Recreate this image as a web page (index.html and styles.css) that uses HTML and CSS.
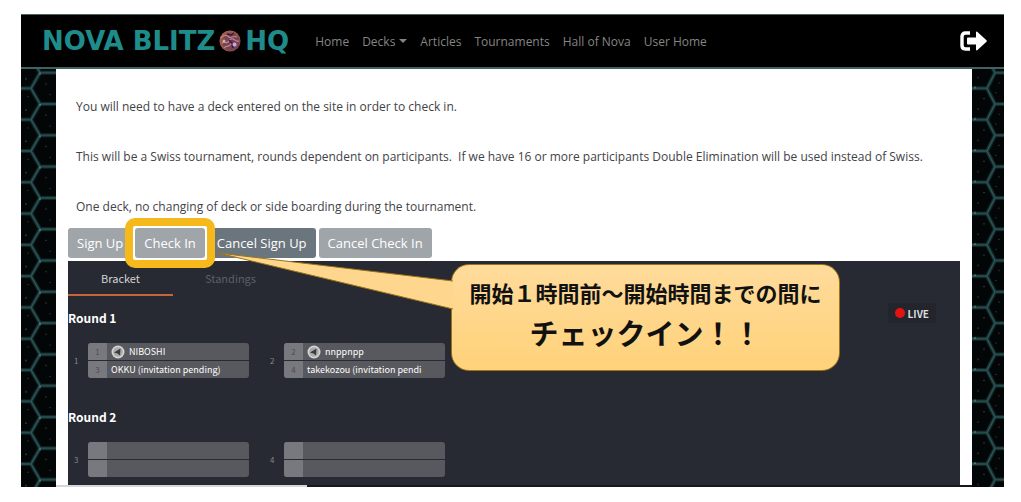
FILE: index.html
```
<!DOCTYPE html>
<html lang="en">
<head>
    <meta charset="UTF-8">
    <meta name="viewport" content="width=device-width, initial-scale=1.0">
    <title>Nova Blitz HQ - Tournament</title>
    <link rel="stylesheet" href="styles.css">
</head>
<body>

<div class="site">
    <header class="navbar">
        <a class="brand" href="#">
            <span>NOVA BLITZ</span>
            <svg class="planet" viewBox="0 0 22 22" aria-hidden="true">
                <defs>
                    <radialGradient id="planetFill" cx="0.55" cy="0.55" r="0.55">
                        <stop offset="0" stop-color="#6a3a5c"/>
                        <stop offset="0.7" stop-color="#7b4652"/>
                        <stop offset="1" stop-color="#b0684e"/>
                    </radialGradient>
                </defs>
                <circle cx="11" cy="11" r="10.5" fill="url(#planetFill)"/>
                <path d="M2 8c3-4 6-3 8-1s5-2 8 0M3 13c2-2 4 1 6-1s2-4 5-3 3 3 6 2M5 18c2-3 5-1 6-3s4-1 6 1" fill="none" stroke="#c08a8a" stroke-width="1.2"/>
                <path d="M8 4l4 1 3-2M10 10l3 3 1 5" fill="none" stroke="#3a1a38" stroke-width="1.5"/>
                <circle cx="15.5" cy="14.5" r="2" fill="#c9a6e8"/>
                <circle cx="5" cy="11" r="1.5" fill="#e0a898"/>
            </svg>
            <span>HQ</span>
        </a>
        <nav class="nav-links">
            <a href="#">Home</a>
            <a class="dropdown" href="#">Decks</a>
            <a href="#">Articles</a>
            <a href="#">Tournaments</a>
            <a href="#">Hall of Nova</a>
            <a href="#">User Home</a>
        </nav>
        <a class="logout" href="#" aria-label="Log out">
            <svg viewBox="0 0 28 20">
                <path d="M10 2H5.5Q2 2 2 5.5v9Q2 18 5.5 18H10" fill="none" stroke="#fff" stroke-width="3.4"/>
                <path d="M8 6.500h8V1.500Q16 0 17.500 1L26.500 9.200Q27.200 10 26.500 10.800L17.500 19Q16 20 16 18.500V13.500H8Q7 13.500 7 12.500V7.500Q7 6.500 8 6.500z" fill="#fff"/>
            </svg>
        </a>
    </header>

    <div class="page">
        <svg class="hex" aria-hidden="true">
            <defs>
                <pattern id="hexLeft" width="35" height="31.3" y="3.7" patternUnits="userSpaceOnUse">
                    <path d="M35 0H19L10 15.650L19 31.300H35M0 15.650H10" fill="none" stroke="#12282a" stroke-width="4"/>
                    <path d="M35 0H19L10 15.650L19 31.300H35M0 15.650H10" fill="none" stroke="#2b5556" stroke-width="1.5"/>
                    <circle cx="5" cy="6" r="0.6" fill="#777"/>
                    <circle cx="25" cy="11" r="0.5" fill="#875"/>
                    <circle cx="29" cy="22" r="0.6" fill="#555"/>
                    <circle cx="7" cy="24" r="0.5" fill="#754"/>
                    <circle cx="19" cy="1" r="1" fill="#4c8080"/>
                </pattern>
            </defs>
            <rect width="100%" height="100%" fill="#030606"/>
            <rect width="100%" height="100%" fill="url(#hexLeft)"/>
        </svg>

        <main class="content">
            <div class="rules">
                <p>You will need to have a deck entered on the site in order to check in.</p>
                <p>This will be a Swiss tournament, rounds dependent on participants.&nbsp; If we have 16 or more participants Double Elimination will be used instead of Swiss.</p>
                <p>One deck, no changing of deck or side boarding during the tournament.</p>
            </div>

            <div class="actions">
                <button class="btn">Sign Up</button>
                <div class="highlight">
                    <button class="btn">Check In</button>
                </div>
                <button class="btn btn-active">Cancel Sign Up</button>
                <button class="btn">Cancel Check In</button>
            </div>

            <section class="bracket">
                <div class="tabs">
                    <button class="tab tab-current">Bracket</button>
                    <button class="tab">Standings</button>
                </div>

                <div class="round-head">
                    <h2>Round 1</h2>
                    <span class="live">LIVE</span>
                </div>
                <div class="matches">
                    <div class="match">
                        <span class="match-no">1</span>
                        <div class="players">
                            <div class="player">
                                <span class="seed">1</span>
                                <span class="name">
                                    <svg class="avatar" viewBox="0 0 14 14"><circle cx="7" cy="7" r="6.5" fill="#d4d4d4"/><circle cx="7" cy="7" r="4.8" fill="#aaa"/><path d="M3 7.5L9.5 3.5L9 10.5L6.5 8.5z" fill="#3b3b3b"/></svg>
                                    NIBOSHI
                                </span>
                            </div>
                            <div class="player">
                                <span class="seed">3</span>
                                <span class="name">OKKU (invitation pending)</span>
                            </div>
                        </div>
                    </div>
                    <div class="match">
                        <span class="match-no">2</span>
                        <div class="players">
                            <div class="player">
                                <span class="seed">2</span>
                                <span class="name">
                                    <svg class="avatar" viewBox="0 0 14 14"><circle cx="7" cy="7" r="6.5" fill="#d4d4d4"/><circle cx="7" cy="7" r="4.8" fill="#aaa"/><path d="M3 7.5L9.5 3.5L9 10.5L6.5 8.5z" fill="#3b3b3b"/></svg>
                                    nnppnpp
                                </span>
                            </div>
                            <div class="player">
                                <span class="seed">4</span>
                                <span class="name">takekozou (invitation pendi</span>
                            </div>
                        </div>
                    </div>
                </div>

                <div class="round-head">
                    <h2>Round 2</h2>
                </div>
                <div class="matches">
                    <div class="match">
                        <span class="match-no">3</span>
                        <div class="players">
                            <div class="player"><span class="seed"></span></div>
                            <div class="player"><span class="seed"></span></div>
                        </div>
                    </div>
                    <div class="match">
                        <span class="match-no">4</span>
                        <div class="players">
                            <div class="player"><span class="seed"></span></div>
                            <div class="player"><span class="seed"></span></div>
                        </div>
                    </div>
                </div>

                <div class="callout" lang="ja">
                    <svg class="callout-tail" viewBox="0 0 236 60" aria-hidden="true">
                        <path d="M236 29L1 1L236 57" fill="#fed68d" stroke="#9b7416" stroke-width="1"/>
                    </svg>
                    <p class="callout-when">開始１時間前～開始時間までの間に</p>
                    <p class="callout-what">チェックイン！！</p>
                </div>
            </section>
            <div class="bottom-line"></div>
        </main>

        <svg class="hex" aria-hidden="true">
            <defs>
                <pattern id="hexRight" width="32" height="31.3" y="3.7" patternUnits="userSpaceOnUse">
                    <path d="M32 0H23L15 15.650L23 31.300H32M0 15.650H15" fill="none" stroke="#12282a" stroke-width="4"/>
                    <path d="M32 0H23L15 15.650L23 31.300H32M0 15.650H15" fill="none" stroke="#2b5556" stroke-width="1.5"/>
                    <circle cx="6" cy="5" r="0.6" fill="#666"/>
                    <circle cx="12" cy="26" r="0.6" fill="#765"/>
                    <circle cx="27" cy="10" r="0.5" fill="#864"/>
                    <circle cx="24" cy="20" r="0.5" fill="#666"/>
                    <circle cx="3" cy="15" r="1" fill="#4c8080"/>
                </pattern>
            </defs>
            <rect width="100%" height="100%" fill="#030606"/>
            <rect width="100%" height="100%" fill="url(#hexRight)"/>
        </svg>
    </div>
</div>

</body>
</html>
```
FILE: styles.css
```
* {
    box-sizing: border-box;
}
body {
    margin: 0;
    padding: 14px 17px 15px 21px;
    background-color: white;
    color: #3f4347;
    font-family: "Open Sans", "Noto Sans", sans-serif;
    font-size: 12px;
}
h2, p {
    margin: 0;
}
a {
    text-decoration: none;
}
button {
    border: none;
    font-family: inherit;
    cursor: pointer;
}

/* Navbar */
.navbar {
    display: flex;
    align-items: center;
    height: 55px;
    padding: 0 16px 0 21px;
    background-color: black;
    border-top: 1px solid #4d6664;
    border-bottom: 2px solid #3f6360;
}
.brand {
    display: flex;
    align-items: center;
    gap: 4px;
    color: #1f8c8c;
    font-family: "DejaVu Sans", sans-serif;
    font-size: 26px;
    font-weight: bold;
    line-height: 30px;
    white-space: nowrap;
}
.planet {
    width: 22px;
    height: 22px;
}
.nav-links {
    display: flex;
    gap: 13px;
    margin-left: 26px;
    white-space: nowrap;
}
.nav-links a {
    color: #858585;
}
.dropdown::after {
    content: "";
    display: inline-block;
    margin-left: 4px;
    vertical-align: 3px;
    border-top: 4px solid;
    border-left: 4px solid transparent;
    border-right: 4px solid transparent;
}
.logout {
    margin-left: auto;
}
.logout svg {
    display: block;
    width: 28px;
    height: 20px;
}

/* Page body between the two hex strips */
.page {
    display: grid;
    grid-template-columns: 35px 1fr 32px;
}
.hex {
    display: block;
    width: 100%;
    height: 100%;
}
.rules {
    display: flex;
    flex-direction: column;
    gap: 30px;
    padding: 28px 20px 11px;
    line-height: 20px;
}
.actions {
    display: flex;
    gap: 3px;
    padding: 0 12px 3px;
}
.btn {
    height: 30px;
    padding: 0 9px;
    border-radius: 3px;
    background-color: #a0a5aa;
    color: white;
    font-size: 13px;
    white-space: nowrap;
}
.btn-active {
    background-color: #6b757d;
}
.highlight {
    position: relative;
    z-index: 1;
}
.highlight::after {
    content: "";
    position: absolute;
    inset: -10px;
    border: 8px solid #f6b91b;
    border-radius: 10px;
    box-shadow: inset 0 0 0 2px white;
    pointer-events: none;
}

/* Bracket */
.bracket {
    position: relative;
    margin: 0 12px;
    padding-bottom: 8px;
    background-color: #272a33;
    color: white;
    font-family: "Noto Sans CJK JP", sans-serif;
}
.tabs {
    display: flex;
    gap: 5px;
}
.tab {
    width: 105px;
    height: 35px;
    padding: 0;
    border-bottom: 2px solid transparent;
    background: none;
    color: #5c5f68;
    font-size: 11px;
}
.tab-current {
    border-color: #c5663a;
    color: #d3d4d6;
}
.round-head {
    display: flex;
    justify-content: space-between;
    align-items: flex-start;
    height: 47px;
    padding: 7px 24px 0 0;
}
.round-head h2 {
    padding-top: 5px;
    font-size: 12px;
    line-height: 20px;
}
.live {
    display: flex;
    align-items: center;
    gap: 3px;
    height: 20px;
    padding: 0 7px;
    background-color: #23252d;
    color: #dcdcde;
    font-size: 10px;
    font-weight: bold;
}
.live::before {
    content: "";
    width: 10px;
    height: 10px;
    border-radius: 50%;
    background-color: #e31313;
}
.matches {
    display: flex;
    gap: 19px;
    margin-bottom: 17px;
    padding-left: 4px;
}
.round-head:nth-of-type(4) + .matches {
    margin-bottom: 0;
}
.match {
    display: flex;
    align-items: center;
    width: 177px;
}
.match-no {
    width: 16px;
    padding-left: 2px;
    color: #85878d;
    font-size: 8px;
}
.players {
    display: flex;
    flex: 1;
    flex-direction: column;
    gap: 1px;
    overflow: hidden;
    border-radius: 3px;
}
.player {
    display: flex;
    height: 17px;
    background-color: #58595e;
    line-height: 17px;
}
.seed {
    width: 19px;
    background-color: #78797e;
    color: #4b4c51;
    font-size: 8px;
    text-align: center;
}
.name {
    display: flex;
    align-items: center;
    gap: 4px;
    padding-left: 4px;
    font-size: 9px;
    white-space: nowrap;
}
.avatar {
    width: 14px;
    height: 14px;
}

/* Speech bubble pointing at the check in button */
.callout {
    position: absolute;
    top: 3px;
    left: 383px;
    width: 389px;
    height: 107px;
    padding-top: 12px;
    border: 1px solid #9b7416;
    border-radius: 18px;
    background: linear-gradient(#ffdb9b, #ffd27a);
    color: #111;
    font-weight: bold;
    text-align: center;
    white-space: nowrap;
}
.callout-tail {
    position: absolute;
    top: -13px;
    left: -235px;
    width: 236px;
    height: 60px;
}
.callout-when {
    font-size: 22px;
    line-height: 30px;
}
.callout-what {
    font-size: 29px;
    line-height: 50px;
}
.bottom-line {
    height: 2px;
    background: linear-gradient(to right, #d5d5da 251px, #17181d 251px);
}
```
